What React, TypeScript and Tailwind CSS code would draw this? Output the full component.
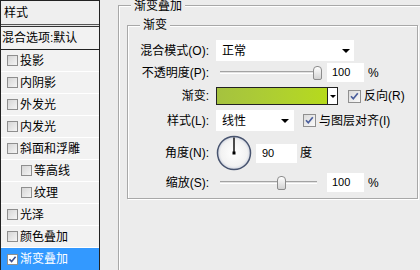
import React from "react";

function ListBox({ checked }: { checked?: boolean }) {
  return (
    <svg width="11" height="11" viewBox="0 0 11 11" className="shrink-0">
      <defs>
        <linearGradient id="lbg" x1="0" y1="0" x2="1" y2="1">
          <stop offset="0" stopColor="#d4d4d4" />
          <stop offset="1" stopColor="#f6f6f6" />
        </linearGradient>
      </defs>
      <rect x="0.5" y="0.5" width="10" height="10" fill={checked ? "#ffffff" : "url(#lbg)"} stroke="#8e8e8e" />
      {checked && <path d="M2.5 5.2 L4.6 7.6 L8.6 2.8" fill="none" stroke="#3d4f8f" strokeWidth="1.6" />}
    </svg>
  );
}

function CheckBox() {
  return (
    <svg width="13" height="13" viewBox="0 0 13 13" className="shrink-0">
      <defs>
        <linearGradient id="cbg" x1="0" y1="0" x2="1" y2="1">
          <stop offset="0" stopColor="#d9d9d9" />
          <stop offset="1" stopColor="#fbfbfb" />
        </linearGradient>
      </defs>
      <rect x="0.5" y="0.5" width="12" height="12" fill="url(#cbg)" stroke="#8f8f8f" />
      <path d="M3 6.2 L5.3 8.8 L9.8 3.3" fill="none" stroke="#4a5e9c" strokeWidth="1.7" />
    </svg>
  );
}

function Arrow() {
  return <div className="w-0 h-0 border-l-[4px] border-r-[4px] border-t-[4px] border-l-transparent border-r-transparent border-t-black" />;
}

function Slider({ pos }: { pos: number }) {
  return (
    <div className="relative w-[107px] h-[19px] flex items-center">
      <div className="ml-[4px] w-[97px] h-[3px] border-t border-t-[#a3a3a3] border-b border-b-white bg-[#e2e2e2]" />
      <div
        className="absolute top-[3px] w-[9px] h-[14px] rounded-t-[4px] rounded-b-[2px] border border-[#8c8c8c] bg-gradient-to-b from-white to-[#d2d2d2]"
        style={{ left: pos }}
      />
    </div>
  );
}

function Label({ children }: { children: React.ReactNode }) {
  return <div className="w-[82px] text-right shrink-0 pr-[1px]">{children}</div>;
}

export default function App() {
  const items: { t: string; sub?: boolean; active?: boolean }[] = [
    { t: "投影" },
    { t: "内阴影" },
    { t: "外发光" },
    { t: "内发光" },
    { t: "斜面和浮雕" },
    { t: "等高线", sub: true },
    { t: "纹理", sub: true },
    { t: "光泽" },
    { t: "颜色叠加" },
    { t: "渐变叠加", active: true },
  ];

  return (
    <div className="w-[420px] h-[270px] overflow-hidden flex bg-[#ececec] text-black text-[12px] leading-none font-['Liberation_Sans','Noto_Sans_CJK_SC',sans-serif]">
      {/* left panel */}
      <div className="w-[100px] shrink-0 h-full border-l border-r border-t border-[#222] bg-[#f2f2f2] flex flex-col">
        <div className="h-[23px] flex items-center pl-[3px] bg-[#efefef]">样式</div>
        <div className="h-[1px] bg-[#555]" />
        <div className="h-[1px] bg-[#e4e4e4]" />
        <div className="h-[1px] bg-[#333]" />
        <div className="h-[22px] flex items-center pl-[1px]">混合选项:默认</div>
        <div className="h-[1px] bg-[#222]" />
        {items.map((it) => (
          <div
            key={it.t}
            className={
              it.active
                ? "h-[22px] flex items-center gap-[2px] bg-[#3399ff] text-white pl-[6px]"
                : it.sub
                ? "h-[22px] flex items-center gap-[2px] border-b border-white pl-[20px]"
                : "h-[22px] flex items-center gap-[2px] border-b border-white pl-[6px]"
            }
          >
            <ListBox checked={it.active} />
            <span>{it.t}</span>
          </div>
        ))}
      </div>

      {/* right area */}
      <div className="flex-1 pl-[18px] pt-[5px] overflow-hidden">
        <div className="relative w-[310px] h-[300px] border border-[#a8a8a8] shadow-[inset_1px_1px_0_#fff,1px_1px_0_#fff] pl-[8px] pt-[19px]">
          <span className="absolute left-[12px] top-[-6px] px-[3px] bg-[#ececec]">渐变叠加</span>
          <div className="relative w-[291px] h-[174px] border border-[#a8a8a8] shadow-[inset_1px_1px_0_#fff,1px_1px_0_#fff] pt-[14px]">
            <span className="absolute left-[12px] top-[-7px] px-[3px] bg-[#ececec]">渐变</span>

            {/* row 1 */}
            <div className="h-[21px] flex items-center">
              <Label>混合模式(O):</Label>
              <div className="ml-[6px] w-[138px] h-[21px] bg-white flex items-center justify-between pl-[6px] pr-[4px]">
                <span>正常</span>
                <Arrow />
              </div>
            </div>

            {/* row 2 */}
            <div className="mt-[2px] h-[19px] flex items-center">
              <Label>不透明度(P):</Label>
              <div className="ml-[6px]">
                <Slider pos={97} />
              </div>
              <div className="ml-[4px] w-[37px] h-[19px] bg-white flex items-center pl-[5px] text-[11px]">100</div>
              <span className="ml-[4px]">%</span>
            </div>

            {/* row 3 */}
            <div className="mt-[5px] h-[18px] flex items-center">
              <Label>渐变:</Label>
              <div className="ml-[6px] w-[122px] h-[18px] border border-[#222] flex">
                <div className="flex-1 bg-gradient-to-r from-[#a5c23f] to-[#b6da1b]" />
                <div className="w-[10px] border-l border-[#222] bg-white flex items-center justify-center">
                  <div className="w-0 h-0 border-l-[3px] border-r-[3px] border-t-[3px] border-l-transparent border-r-transparent border-t-black" />
                </div>
              </div>
              <div className="ml-[10px] flex items-center gap-[3px]">
                <CheckBox />
                <span>反向(R)</span>
              </div>
            </div>

            {/* row 4 */}
            <div className="mt-[5px] h-[21px] flex items-center">
              <Label>样式(L):</Label>
              <div className="ml-[6px] w-[78px] h-[21px] bg-white flex items-center justify-between pl-[6px] pr-[5px]">
                <span>线性</span>
                <Arrow />
              </div>
              <div className="ml-[9px] flex items-center gap-[3px]">
                <CheckBox />
                <span>与图层对齐(I)</span>
              </div>
            </div>

            {/* row 5 */}
            <div className="mt-[4px] h-[36px] flex items-center">
              <Label>角度(N):</Label>
              <svg width="36" height="36" viewBox="0 0 36 36" className="ml-[6px] shrink-0">
                <defs>
                  <radialGradient id="dial" cx="0.5" cy="0.5" r="0.5">
                    <stop offset="0" stopColor="#ffffff" />
                    <stop offset="0.8" stopColor="#f2f2f2" />
                    <stop offset="1" stopColor="#cfd4e0" />
                  </radialGradient>
                </defs>
                <circle cx="18" cy="18" r="16.5" fill="url(#dial)" stroke="#48546f" strokeWidth="1.5" />
                <line x1="18" y1="18" x2="18" y2="2.5" stroke="#000" strokeWidth="1.4" />
                <rect x="16.5" y="16.5" width="3" height="3" fill="#000" />
              </svg>
              <div className="ml-[4px] w-[41px] h-[19px] bg-white flex items-center pl-[6px] text-[11px]">90</div>
              <span className="ml-[3px]">度</span>
            </div>

            {/* row 6 */}
            <div className="mt-[2px] h-[19px] flex items-center">
              <Label>缩放(S):</Label>
              <div className="ml-[6px]">
                <Slider pos={61} />
              </div>
              <div className="ml-[4px] w-[37px] h-[19px] bg-white flex items-center pl-[5px] text-[11px]">100</div>
              <span className="ml-[4px]">%</span>
            </div>
          </div>
        </div>
      </div>
    </div>
  );
}
